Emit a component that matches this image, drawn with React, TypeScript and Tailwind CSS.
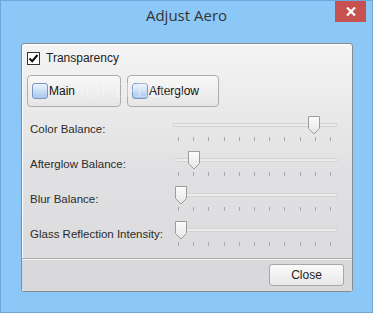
import React from "react";

const font = { fontFamily: '"Liberation Sans", Arial, sans-serif' };

function Thumb() {
  return (
    <svg width="12" height="19" viewBox="0 0 12 19" className="block">
      <defs>
        <linearGradient id="tg" x1="0" y1="0" x2="0" y2="1">
          <stop offset="0" stopColor="#fdfdfd" />
          <stop offset="1" stopColor="#e4e4e4" />
        </linearGradient>
      </defs>
      <path d="M0.5 0.5 H11.5 V12.5 L6 18 L0.5 12.5 Z" fill="url(#tg)" stroke="#9c9c9c" strokeWidth="1" />
    </svg>
  );
}

function Slider({ label, left }: { label: string; left: number }) {
  return (
    <div className="flex h-[35px]">
      <div className="w-[151px] pl-[8px] pt-[6px] text-[11.5px] text-[#2b2b2b] leading-[14px] whitespace-nowrap">{label}</div>
      <div className="relative w-[164px] h-[35px]">
        <div className="absolute left-0 right-0 top-[7px] h-[4px] bg-[#ececec] border border-[#d4d4d4] rounded-[1px]" />
        <div className="absolute left-[5px] w-[153px] top-[21px] flex justify-between">
          {Array.from({ length: 11 }).map((_, i) => (
            <div key={i} className="w-px h-[4px] bg-[#a9a9a9]" />
          ))}
        </div>
        <div className="absolute top-0" style={{ left }}>
          <Thumb />
        </div>
      </div>
    </div>
  );
}

function BlueBox() {
  return (
    <div className="w-[16px] h-[16px] rounded-[3px] border border-[#7896c4] bg-gradient-to-b from-[#eef4fd] to-[#a9c7ef]" />
  );
}

export default function App() {
  return (
    <div className="w-[373px] h-[313px] bg-[#8cc8f7] border border-[#6ea6d9] flex flex-col relative overflow-hidden" style={font}>
      <div className="h-[42px] flex justify-center pt-[4px]">
        <span className="text-[15px] text-[#333] leading-[20px]" style={{ fontFamily: '"Open Sans", "Liberation Sans", sans-serif' }}>Adjust Aero</span>
      </div>
      <div className="absolute right-[6px] top-0 w-[31px] h-[21px] bg-[#c75050] flex items-center justify-center">
        <svg width="10" height="9" viewBox="0 0 10 9">
          <path d="M1 0.5 L9 8.5 M9 0.5 L1 8.5" stroke="#fff" strokeWidth="2.2" />
        </svg>
      </div>
      <div className="ml-[20px] w-[332px] h-[249px] border border-[#8a8a8a] rounded-[3px] bg-gradient-to-b from-[#f4f4f4] via-[#e1e1e3] to-[#dadadc] flex flex-col relative shadow-[inset_1px_1px_0_#ffffff]">
        <div className="flex items-center h-[14px] mt-[7px] ml-[5px] gap-[6px]">
          <div className="w-[13px] h-[13px] border border-[#333] bg-white flex items-center justify-center">
            <svg width="11" height="11" viewBox="0 0 11 11">
              <path d="M1.5 5.5 L4.2 8.2 L9.5 2" stroke="#111" strokeWidth="2" fill="none" />
            </svg>
          </div>
          <span className="text-[12px] text-[#222] leading-[14px]">Transparency</span>
        </div>
        <div className="flex ml-[5px] mt-[10px] gap-[6px]">
          <div className="w-[94px] h-[32px] rounded-[4px] border border-[#acacac] bg-gradient-to-b from-[#f8f8f8] to-[#e6e6e6] flex items-center pl-[4px] gap-px">
            <BlueBox />
            <span className="text-[12px] text-[#111]">Main</span>
          </div>
          <div className="w-[92px] h-[32px] rounded-[4px] border border-[#acacac] bg-gradient-to-b from-[#f8f8f8] to-[#e6e6e6] flex items-center pl-[4px] gap-px">
            <BlueBox />
            <span className="text-[12px] text-[#111]">Afterglow</span>
          </div>
        </div>
        <div className="flex flex-col mt-[9px]">
          <Slider label="Color Balance:" left={135} />
          <Slider label="Afterglow Balance:" left={15} />
          <Slider label="Blur Balance:" left={2} />
          <Slider label="Glass Reflection Intensity:" left={2} />
        </div>
        <div className="mt-[2px] flex-1 border-t border-[#a9a9a9] bg-[#d9d9db] shadow-[inset_0_1px_0_#f4f4f4] flex justify-end items-start pt-[5px] pr-[8px]">
          <div className="w-[75px] h-[22px] rounded-[3px] border border-[#a8a8a8] bg-gradient-to-b from-[#fbfbfb] to-[#e8e8e8] flex items-center justify-center text-[12px] text-[#222]">
            Close
          </div>
        </div>
        <div className="absolute left-[51px] top-[34px] text-[21px] leading-[24px] text-white opacity-30 pointer-events-none" style={{ fontFamily: '"Liberation Serif", serif' }}>
          SOFTPEDIA
        </div>
      </div>
    </div>
  );
}
